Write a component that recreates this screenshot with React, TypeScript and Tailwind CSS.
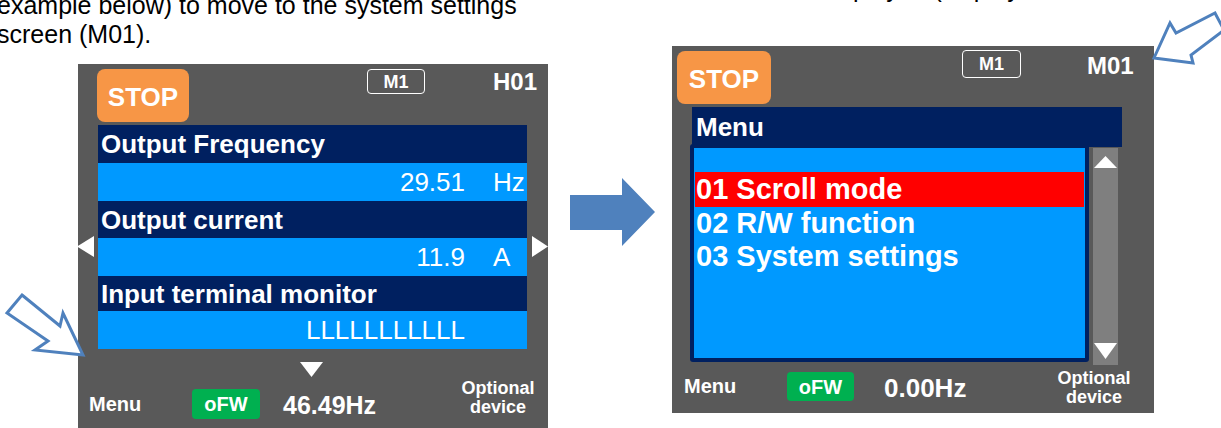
import React from 'react';

const FONT = "font-['Liberation_Sans',Arial,sans-serif]";

type TriProps = { dir: 'left' | 'right' | 'up' | 'down'; w: number; h: number; className?: string };

const Tri: React.FC<TriProps> = ({ dir, w, h, className }) => {
  const pts =
    dir === 'left' ? `${w},0 ${w},${h} 0,${h / 2}` :
    dir === 'right' ? `0,0 0,${h} ${w},${h / 2}` :
    dir === 'up' ? `0,${h} ${w},${h} ${w / 2},0` :
    `0,0 ${w},0 ${w / 2},${h}`;
  return (
    <svg width={w} height={h} className={`block ${className ?? ''}`}>
      <polygon points={pts} fill="#ffffff" />
    </svg>
  );
};

const rows = [
  { title: 'Output Frequency', value: '29.51', unit: 'Hz' },
  { title: 'Output current', value: '11.9', unit: 'A' },
  { title: 'Input terminal monitor', value: 'LLLLLLLLLLL', unit: '' },
];
const titleH = ['h-[38px]', 'h-[37px]', 'h-[35px]'];

const LeftPanel: React.FC = () => (
  <div className="ml-[78px] mt-[15px] w-[470px] h-[364px] bg-[#595959] text-white">
    {/* header: status + mode + screen id */}
    <div className="flex items-start pl-[19px] pt-[5px]">
      <div className="w-[92px] h-[53px] rounded-[8px] bg-[#F79646] flex items-center justify-center pt-[3px] text-[26px] font-bold leading-none">STOP</div>
      <div className="ml-[178px] w-[58px] h-[25px] rounded-[4px] border-[1.5px] border-white flex items-center justify-center text-[18px] font-bold leading-none">M1</div>
      <div className="ml-[68px] mt-[1px] text-[24px] leading-[24px] font-bold">H01</div>
    </div>

    {/* monitor rows with side arrows */}
    <div className="flex items-start mt-[3px]">
      <div className="w-[20px] pt-[111px]">
        <Tri dir="left" w={17} h={21} className="-ml-[1px]" />
      </div>
      <div className="w-[430px]">
        {rows.map((r, i) => (
          <div key={r.title}>
            <div className={`${titleH[i]} bg-[#002060] flex items-center pl-[3px] text-[26px] font-bold leading-none`}>{r.title}</div>
            <div className="h-[38px] bg-[#0099FF] flex items-center justify-end text-[26px] leading-none">
              <span>{r.value}</span>
              <span className="w-[62px] pl-[28px]">{r.unit}</span>
            </div>
          </div>
        ))}
      </div>
      <div className="pl-[5px] pt-[111px]">
        <Tri dir="right" w={16} h={21} />
      </div>
    </div>

    <Tri dir="down" w={23} h={15} className="ml-[222px] mt-[13px]" />

    {/* footer */}
    <div className="flex items-start">
      <div className="ml-[11px] w-[103px] mt-[17px] text-[20px] leading-[20px] font-bold">Menu</div>
      <div className="mt-[12px] w-[68px] h-[30px] rounded-[4px] bg-[#00B050] flex items-center justify-center text-[20px] leading-none font-bold">oFW</div>
      <div className="ml-[23px] w-[165px] mt-[16px] text-[25px] leading-[25px] font-bold">46.49Hz</div>
      <div className="w-[100px] mt-[2px] text-center text-[18px] leading-[19px] font-bold">Optional<br />device</div>
    </div>
  </div>
);

const RightPanel: React.FC = () => (
  <div className="mt-[43px] w-[482px] h-[367px] bg-[#595959] text-white">
    <div className="flex items-start pl-[5px] pt-[4px]">
      <div className="mt-[1px] w-[94px] h-[53px] rounded-[8px] bg-[#F79646] flex items-center justify-center pt-[2px] text-[26px] font-bold leading-none">STOP</div>
      <div className="ml-[191px] w-[59px] h-[28px] rounded-[4px] border-[1.5px] border-white flex items-center justify-center text-[18px] font-bold leading-none">M1</div>
      <div className="ml-[66px] mt-[4px] text-[24px] leading-[24px] font-bold">M01</div>
    </div>

    <div className="ml-[20px] mt-[3px] w-[430px] h-[40px] bg-[#002060] flex items-center pl-[4px] text-[26px] font-bold leading-none">Menu</div>

    <div className="flex items-start ml-[18px] -mt-[3px]">
      <div className="w-[399px] h-[218px] border-[4px] border-[#002060] rounded-[3px] bg-[#0099FF] pt-[24px] px-[1px] text-[29px] leading-[33px] font-bold">
        <div className="h-[35px] bg-[#FF0000] flex items-center pl-[1px]">01 Scroll mode</div>
        <div className="h-[33px] pl-[1px]">02 R/W function</div>
        <div className="h-[33px] pl-[1px]">03 System settings</div>
      </div>
      <div className="ml-[4px] mt-[4px] w-[25px] h-[217px] bg-[#7F7F7F] flex flex-col items-center justify-between pt-[8px] pb-[6px]">
        <Tri dir="up" w={23} h={12} />
        <Tri dir="down" w={23} h={16} />
      </div>
    </div>

    <div className="flex items-start">
      <div className="ml-[12px] w-[103px] mt-[11px] text-[20px] leading-[20px] font-bold">Menu</div>
      <div className="mt-[7px] w-[67px] h-[29px] rounded-[4px] bg-[#00B050] flex items-center justify-center text-[20px] leading-none font-bold">oFW</div>
      <div className="ml-[30px] w-[160px] mt-[10px] text-[26px] leading-[26px] font-bold">0.00Hz</div>
      <div className="w-[100px] mt-[4px] text-center text-[18px] leading-[19px] font-bold">Optional<br />device</div>
    </div>
  </div>
);

export default function App() {
  return (
    <div className={`relative w-[1221px] h-[428px] overflow-hidden bg-white ${FONT}`}>
      <div className="flex items-start">
        <div className="w-[548px] shrink-0">
          <p className="-mt-[9px] -ml-[3px] text-[25px] leading-[29px] text-black whitespace-nowrap">
            example below) to move to the system settings<br />screen (M01).
          </p>
          <LeftPanel />
        </div>

        {/* big transition arrow */}
        <svg width={85} height={68} className="ml-[22px] mt-[178px] shrink-0">
          <polygon points="0,17 52,17 52,0 85,34 52,68 52,52 0,52" fill="#4F81BD" />
        </svg>

        <div className="ml-[17px] shrink-0">
          <p className="-mt-[26px] ml-[124px] h-[29px] text-[25px] leading-[29px] text-black whitespace-nowrap">is displayed (display</p>
          <RightPanel />
        </div>
      </div>

      {/* callout arrows */}
      <svg width={1221} height={428} className="absolute inset-0 pointer-events-none">
        <polygon points="22,295 60,326 63,313 83,355 35,350 48,341 7,313" fill="#ffffff" stroke="#4F81BD" strokeWidth={3} strokeLinejoin="miter" />
        <polygon points="1154,58 1170,23 1176,33 1215,13 1224,30 1191,55 1193,63" fill="#ffffff" stroke="#4F81BD" strokeWidth={3} strokeLinejoin="miter" />
      </svg>
    </div>
  );
}
